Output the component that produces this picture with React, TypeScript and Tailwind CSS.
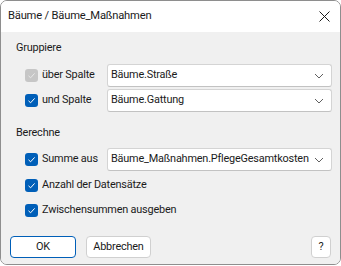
import React from "react";

const font = { fontFamily: 'Roboto, "Segoe UI", sans-serif' };

function Check({ disabled = false }: { disabled?: boolean }) {
  return (
    <div
      className={
        "w-[13px] h-[13px] rounded-[3px] flex items-center justify-center shrink-0 " +
        (disabled ? "bg-[#c6c6c6]" : "bg-[#005fb8]")
      }
    >
      <svg width="9" height="9" viewBox="0 0 9 9">
        <path
          d="M1.5 4.8 L3.6 6.8 L7.6 2.4"
          fill="none"
          stroke={disabled ? "#e8e8e8" : "#ffffff"}
          strokeWidth="1"
        />
      </svg>
    </div>
  );
}

function Select({ value }: { value: string }) {
  return (
    <div className="w-[225px] h-[23px] bg-white border border-[#d4d4d4] border-b-[#c2c2c2] rounded-[3px] flex items-center pl-[3px] pr-[7px] shrink-0">
      <span className="flex-1 text-[#1b1b1b] whitespace-nowrap overflow-hidden">{value}</span>
      <svg width="10" height="6" viewBox="0 0 10 6">
        <path d="M1 1 L5 5 L9 1" fill="none" stroke="#606060" strokeWidth="1" />
      </svg>
    </div>
  );
}

function Row({ label, value, disabled }: { label: string; value: string; disabled?: boolean }) {
  return (
    <div className="flex items-center h-[23px] pl-[24px]">
      <Check disabled={disabled} />
      <span className="w-[69px] pl-[4px] text-[#1b1b1b] whitespace-nowrap">{label}</span>
      <Select value={value} />
    </div>
  );
}

function CheckRow({ label }: { label: string }) {
  return (
    <div className="flex items-center h-[23px] pl-[24px]">
      <Check />
      <span className="pl-[4px] text-[#1b1b1b] whitespace-nowrap">{label}</span>
    </div>
  );
}

export default function App() {
  return (
    <div className="w-[341px] h-[266px] bg-white text-[10.9px] tracking-[-0.2px]" style={font}>
      <div className="w-[341px] h-[265px] border border-[#8e8e8e] rounded-[7px] overflow-hidden flex flex-col">
        <div className="h-[31px] bg-white flex items-center pl-[7px] pr-[10px] shrink-0">
          <span className="flex-1 text-[11.2px] text-[#1b1b1b]">Bäume / Bäume_Maßnahmen</span>
          <svg width="11" height="11" viewBox="0 0 11 11">
            <path d="M0.5 0.5 L10.5 10.5 M10.5 0.5 L0.5 10.5" stroke="#1b1b1b" strokeWidth="1" />
          </svg>
        </div>
        <div className="flex-1 bg-[#f0f0f0] flex flex-col pt-[8px]">
          <div className="h-[17px] pl-[15px] text-[#1b1b1b] flex items-center">Gruppiere</div>
          <div className="flex flex-col gap-[2px] mt-[7px]">
            <Row label="über Spalte" value="Bäume.Straße" disabled />
            <Row label="und Spalte" value="Bäume.Gattung" />
          </div>
          <div className="h-[17px] pl-[15px] text-[#1b1b1b] flex items-center mt-[13px]">Berechne</div>
          <div className="flex flex-col mt-[6px]">
            <Row label="Summe aus" value="Bäume_Maßnahmen.PflegeGesamtkosten" />
            <div className="mt-[3px]">
              <CheckRow label="Anzahl der Datensätze" />
            </div>
            <div className="mt-[2px]">
              <CheckRow label="Zwischensummen ausgeben" />
            </div>
          </div>
          <div className="flex items-center mt-[14px] pl-[9px] pr-[9px]">
            <button className="w-[66px] h-[22px] bg-white border border-[#005fb8] rounded-[4px] text-[#1b1b1b] flex items-center justify-center">OK</button>
            <button className="ml-[10px] w-[65px] h-[22px] bg-white border border-[#d0d0d0] rounded-[4px] text-[#1b1b1b] flex items-center justify-center">Abbrechen</button>
            <div className="flex-1" />
            <button className="w-[20px] h-[22px] bg-white border border-[#d0d0d0] rounded-[4px] text-[#1b1b1b] flex items-center justify-center">?</button>
          </div>
        </div>
      </div>
    </div>
  );
}
